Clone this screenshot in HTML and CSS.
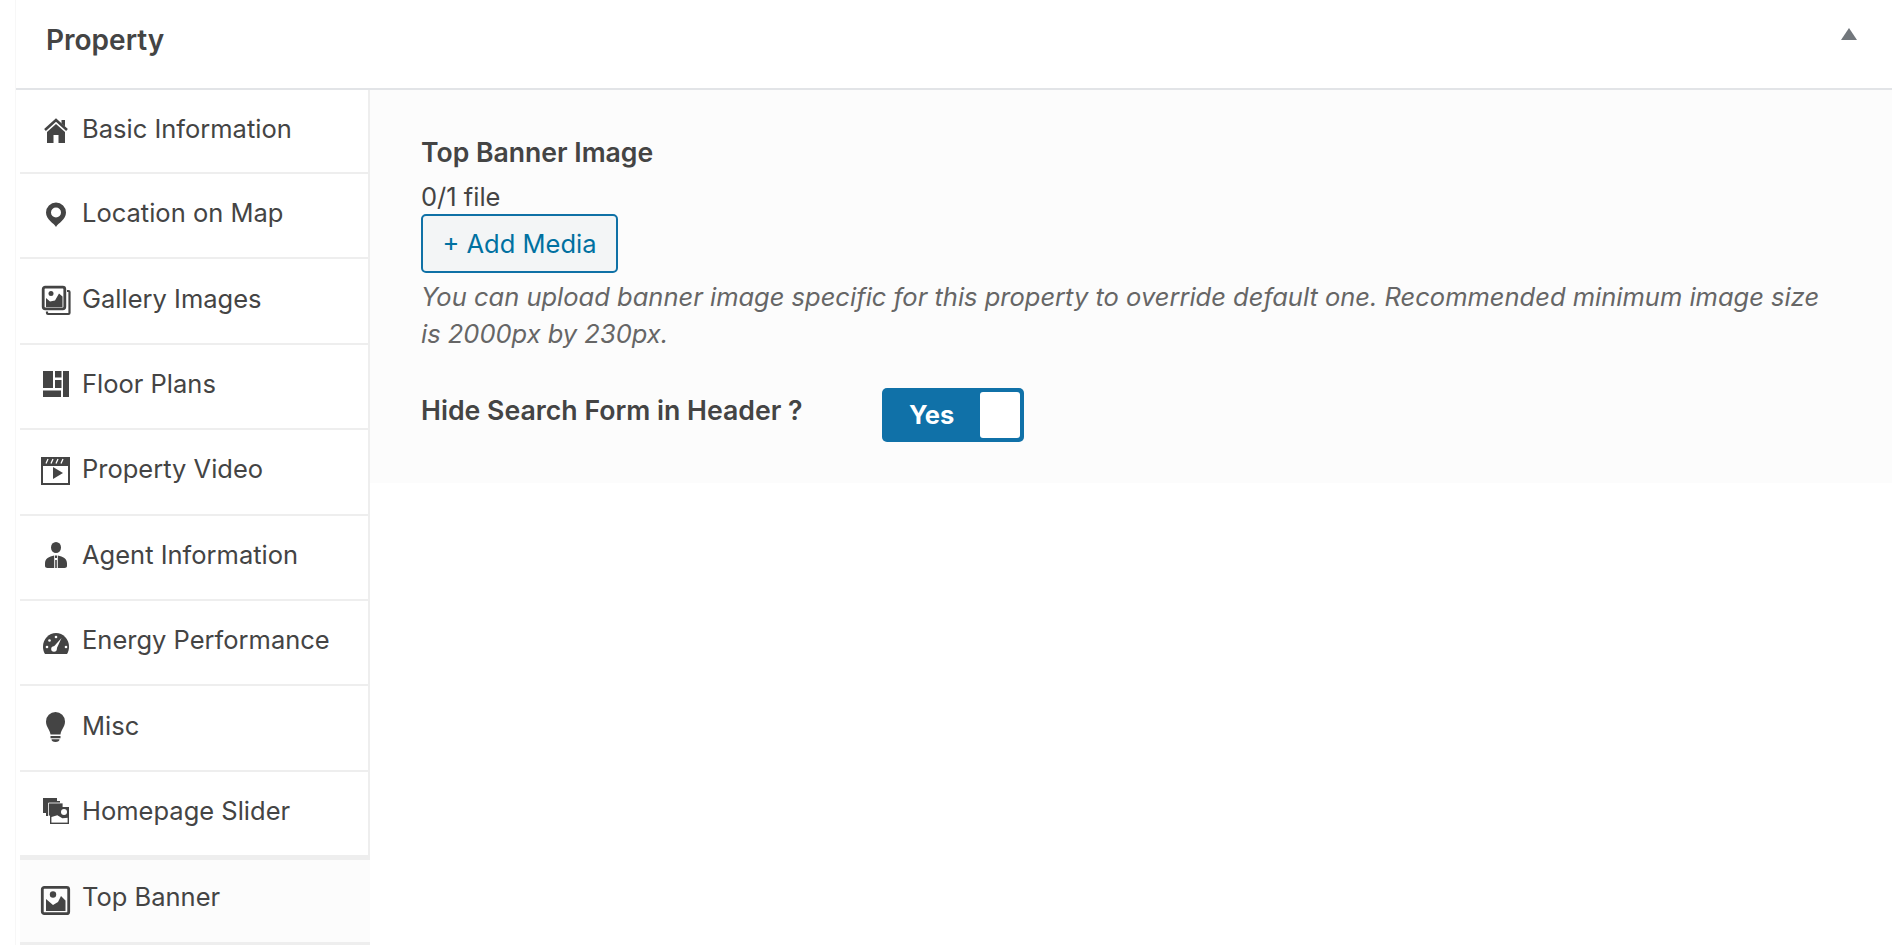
FILE: index.html
```html
<!DOCTYPE html>
<html>
<head>
    <title>Property</title>
    <link rel="stylesheet" href="styles.css">
</head>
<body>
    <div class="panel">
        <div class="panel-head">
            <h2 class="panel-title">Property</h2>
            <span class="panel-toggle"></span>
        </div>
        <div class="panel-body">
            <ul class="tabs">
                <li class="tab">
                    <svg class="ico" viewBox="0 0 32 32"><path d="M7 19 16 11l9 8v11h-6.500v-8h-5v8H7z"/><path d="M5 17 16 7l11 10" fill="none" stroke="#444" stroke-width="2.600"/><path d="M21.500 7h3.500v6.500l-3.500-3z"/></svg>
                    <span>Basic Information</span>
                </li>
                <li class="tab">
                    <svg class="ico" viewBox="0 0 32 32"><path fill-rule="evenodd" d="M16 30C14 26 6 23 6 15.500a10 10 0 0 1 20 0C26 23 18 26 16 30zM16 10.500a5 5 0 1 0 0 10 5 5 0 1 0 0-10z"/></svg>
                    <span>Location on Map</span>
                </li>
                <li class="tab">
                    <svg class="ico" viewBox="0 0 32 32"><rect x="3.200" y="5.200" width="21.600" height="21.600" rx="2" fill="none" stroke="#444" stroke-width="2.800"/><path d="M27 9h1.500a1 1 0 0 1 1 1v21a1 1 0 0 1-1 1H8a1 1 0 0 1-1-1v-1.500" fill="none" stroke="#444" stroke-width="2.200"/><path d="M6 25v-9l4 3.500 5-1 4-7 3.500 3V25z"/><circle cx="11" cy="11.500" r="2.500"/></svg>
                    <span>Gallery Images</span>
                </li>
                <li class="tab">
                    <svg class="ico" viewBox="0 0 32 32"><path d="M3 4h10v17H3zM15 4h6.500v6.500H15zM15 13h6.500v8H15zM3 23.500h18V30H3zM23 4h6v26h-6z"/></svg>
                    <span>Floor Plans</span>
                </li>
                <li class="tab">
                    <svg class="ico" viewBox="0 0 32 32"><path fill-rule="evenodd" d="M1 4h29v28H1zM3 13v17h25V13z"/><path d="M6 10.500 8 6M11 10.500 13 6M16 10.500 18 6M21 10.500 23 6" stroke="#fff" stroke-width="1.300"/><path d="M13 14l10 6-10 6z"/></svg>
                    <span>Property Video</span>
                </li>
                <li class="tab">
                    <svg class="ico" viewBox="0 0 32 32"><ellipse cx="16" cy="9.500" rx="5" ry="5.500"/><path d="M14.200 17.500C9 18.500 5 20.500 5 25.500V28c0 1 1 2 2.500 2h6.700zM17.800 17.500C23 18.500 27 20.500 27 25.500V28c0 1-1 2-2.500 2h-6.700zM15.200 22h1.600v8h-1.600zM15 17.500h2V20h-2z"/></svg>
                    <span>Agent Information</span>
                </li>
                <li class="tab">
                    <svg class="ico" viewBox="0 0 32 32"><path d="M5 30C3.700 28 3 25.500 3 22.500 3 15 9 9 16 9s13 6 13 13.500c0 3-.7 5.500-2 7.500z"/><g fill="#fff"><circle cx="7" cy="23" r="1.300"/><circle cx="9.500" cy="16.500" r="1.300"/><circle cx="16" cy="13" r="1.300"/><circle cx="26" cy="23" r="1.300"/><circle cx="14" cy="25" r="2.800"/><path d="M13 23.500 21.500 14 16 26z"/></g></svg>
                    <span>Energy Performance</span>
                </li>
                <li class="tab">
                    <svg class="ico" viewBox="0 0 32 32"><path d="M15.500 3a9.500 9.500 0 0 1 9.500 9.500c0 5.500-4 8-4.500 13h-10C10 20.500 6 18 6 12.500A9.500 9.500 0 0 1 15.500 3z"/><path d="M10.500 27h10v2.200h-10zM11.500 30.200h8c0 1.800-1.500 2.800-4 2.800s-4-1-4-2.800z"/></svg>
                    <span>Misc</span>
                </li>
                <li class="tab">
                    <svg class="ico" viewBox="0 0 32 32"><path d="M3 4h14v3h3v3h-9v12H6v-3H3z"/><path d="M8.500 9H23v5H13v8H8.500z" stroke="#fff" stroke-width=".8"/><rect x="10.700" y="13.700" width="17.600" height="15.600" fill="#fff" stroke="#444" stroke-width="1.400"/><path d="M10.700 13.700h17.600v10l-6 .5-5-3-6.600 2z"/><circle cx="24" cy="18" r="3" fill="#fff"/></svg>
                    <span>Homepage Slider</span>
                </li>
                <li class="tab active">
                    <svg class="ico" viewBox="0 0 32 32"><rect x="2.300" y="6.300" width="26.400" height="26.400" rx="2" fill="none" stroke="#444" stroke-width="2.800"/><circle cx="13" cy="13.500" r="3.200"/><path d="M6 30V18l7 6 5-3 3-6 4.500 4.500V30z"/></svg>
                    <span>Top Banner</span>
                </li>
            </ul>
            <div class="content">
                <div class="field-label">Top Banner Image</div>
                <div class="file-count">0/1 file</div>
                <button class="add-media">+ Add Media</button>
                <p class="desc">You can upload banner image specific for this property to override default one. Recommended minimum image size<br>is 2000px by 230px.</p>
                <div class="switch-row">
                    <div class="switch-label">Hide Search Form in Header ?</div>
                    <div class="switch">
                        <span class="switch-text">Yes</span>
                        <span class="switch-knob"></span>
                    </div>
                </div>
            </div>
        </div>
    </div>
</body>
</html>
```

FILE: styles.css
```css
html,
body {
    height: 946px;
    overflow: hidden;
}

body {
    margin: 0;
    padding-left: 15px;
    background-color: #fff;
    font-family: Inter, "Noto Sans", sans-serif;
    font-size: 25.500px;
    color: #444;
}

.panel {
    border-left: 1px solid #f7f7f7;
}

.panel-head {
    display: flex;
    justify-content: space-between;
    height: 90px;
    box-sizing: border-box;
    padding-left: 30px;
    border-bottom: 2px solid #e2e4e7;
}

.panel-title {
    margin: 22px 0 0;
    font-size: 28px;
    font-weight: 600;
    line-height: 37px;
}

.panel-toggle {
    width: 0;
    height: 0;
    margin: 28px 35px 0 0;
    border-left: 8px solid transparent;
    border-right: 8px solid transparent;
    border-bottom: 12px solid #72777c;
}

.panel-body {
    display: flex;
    align-items: flex-start;
}

.tabs {
    flex: none;
    width: 354px;
    box-sizing: border-box;
    margin: 0;
    padding: 0 0 0 4px;
    border-right: 2px solid #eee;
    list-style: none;
}

.tab {
    display: flex;
    align-items: center;
    gap: 10px;
    height: 85.400px;
    box-sizing: border-box;
    padding: 0 0 6px 20px;
    border-bottom: 2px solid #eee;
}

.tab:first-child {
    height: 84px;
    padding-bottom: 5px;
}

.tab.active {
    height: 88px;
    margin-right: -2px;
    padding-bottom: 9px;
    border-top: 3px solid #eee;
    border-bottom-width: 3px;
    background-color: #fcfcfc;
}

.ico {
    flex: none;
    width: 32px;
    height: 32px;
    overflow: visible;
    fill: #444;
}

.content {
    flex: 1;
    box-sizing: border-box;
    padding: 44px 50px 41px 51px;
    background-color: #fcfcfc;
}

.field-label {
    font-size: 26.600px;
    font-weight: 600;
    line-height: 37px;
}

.file-count {
    margin-top: 8px;
    line-height: 35px;
}

.add-media {
    display: block;
    width: 197px;
    height: 59px;
    padding: 0;
    border: 2px solid #0f71a6;
    border-radius: 5px;
    background-color: #f3f5f6;
    font-family: inherit;
    font-size: 25.500px;
    color: #0071a1;
}

.desc {
    margin: 5px 0 0;
    font-style: italic;
    line-height: 37px;
    color: #666;
}

.switch-row {
    display: flex;
    margin-top: 36px;
}

.switch-label {
    width: 461px;
    margin-top: 4px;
    font-size: 26.700px;
    font-weight: 600;
    line-height: 37px;
}

.switch {
    display: flex;
    align-items: center;
    justify-content: space-between;
    width: 142px;
    height: 54px;
    box-sizing: border-box;
    padding: 3px 4px 4px 27px;
    border-radius: 5px;
    background-color: #1071a8;
}

.switch-text {
    font-weight: 700;
    color: #fff;
}

.switch-knob {
    width: 40px;
    height: 46px;
    border-radius: 3px;
    background-color: #fff;
}
```
